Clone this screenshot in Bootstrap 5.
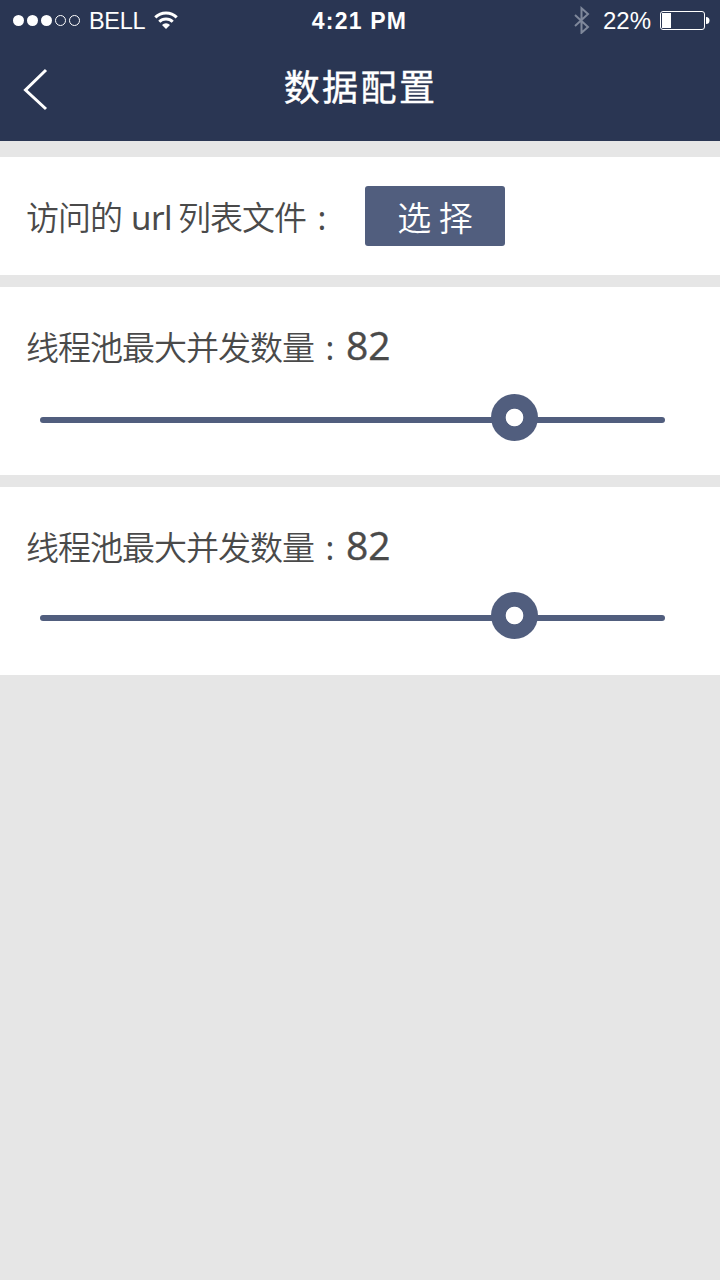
<!DOCTYPE html>
<html lang="zh-CN">
<head>
<meta charset="utf-8">
<meta name="viewport" content="width=device-width, initial-scale=1">
<title>数据配置</title>
<link href="https://cdn.jsdelivr.net/npm/bootstrap@5.3.0/dist/css/bootstrap.min.css" rel="stylesheet">
<style>
  body { background: #e6e6e6; color: #4a4a4a; font-family: "Noto Sans", "Noto Sans CJK SC", sans-serif; }
  .app-head { background: #2a3653; height: 141px; color: #fff; }
  .status-bar { height: 40px; font: 24px/40px "Liberation Sans", sans-serif; }
  .status-bar > div { flex: 1 1 0; }
  .status-bar svg, .title-bar svg { display: block; flex: none; }
  .signal { margin-left: 12px; }
  .battery { margin-right: 10px; }
  .carrier { font-size: 23.5px; letter-spacing: -.3px; margin-left: 8px; padding-top: 2px; }
  .clock { font-size: 23px; font-weight: 700; letter-spacing: 1.2px; margin-right: 1px; padding-top: 1px; }
  .percent { font-size: 24px; margin: 2px 9px 0 13px; }
  .title-bar { height: 101px; }
  .title-bar h1 { font: 400 36px/50px "Noto Sans CJK SC", sans-serif; -webkit-text-stroke: .4px #fff; letter-spacing: 2.4px; margin-top: 20px; padding-left: 1px; }
  .back { left: 20px; top: 26px; }
  .panel { background: #fff; height: 188px; padding: 0 55px 0 26px; }
  .panel-file { height: 118px; }
  .panel-file .label-text { width: 312px; padding-top: 1px; }
  .panel-slider { margin-top: 12px; padding-top: 29px; }
  .panel-slider .form-range { margin-top: 17px; }
  .panel-slider-last .form-range { margin-top: 15px; }
  .label-text { font-family: "Noto Sans CJK SC", sans-serif; font-size: 33px; font-weight: 350; line-height: 60px; letter-spacing: -1px; white-space: nowrap; }
  .latin { font-family: "Noto Sans", sans-serif; font-weight: 400; font-size: 33px; letter-spacing: -.5px; margin: 0 6px 0 9px; }
  .colon { font-family: "Noto Sans", sans-serif; font-weight: 400; letter-spacing: 0; display: inline-block; width: 32px; text-align: center; }
  .btn-pick { background: #515e7e; color: #fff; width: 140px; height: 60px; border-radius: 3px; font: 350 34px/57px "Noto Sans CJK SC", sans-serif; margin-left: 27px; }
  .btn-pick:hover { background: #465372; color: #fff; }
  .amount { font: 400 39px/57px "Open Sans", "Noto Sans", sans-serif; -webkit-text-stroke: .4px #4a4a4a; }
  .form-range { display: block; width: 625px; height: 50px; margin-left: 14px; }
  .form-range::-webkit-slider-runnable-track { height: 6px; background: #515e7e; border-radius: 3px; }
  .form-range::-webkit-slider-thumb { width: 47px; height: 47px; margin-top: -23px; border-radius: 50%; background: radial-gradient(circle, #fff 8.4px, #515e7e 9.2px); }
</style>
</head>
<body>
<header class="app-head">
  <div class="status-bar d-flex align-items-center">
    <div class="d-flex align-items-center">
      <svg class="signal" width="69" height="14" viewBox="0 0 69 14">
        <g fill="#fff"><circle cx="6.5" cy="7.5" r="5.5"/><circle cx="20.5" cy="7.5" r="5.5"/><circle cx="34.5" cy="7.5" r="5.5"/></g>
        <g fill="none" stroke="#fff"><circle cx="48.5" cy="7.5" r="5"/><circle cx="62.5" cy="7.5" r="5"/></g>
      </svg>
      <span class="carrier">BELL</span>
      <svg class="ms-2" width="26" height="20" viewBox="0 0 26 20">
        <g fill="none" stroke="#fff" stroke-width="3"><path d="M2.3 7.4a15 15 0 0 1 21.4 0"/><path d="M6.3 11.8a9.5 9.5 0 0 1 13.4 0"/></g>
        <path fill="#fff" d="M13 19l-4-4a5.7 5.7 0 0 1 8 0z"/>
      </svg>
    </div>
    <span class="clock">4:21 PM</span>
    <div class="d-flex align-items-center justify-content-end">
      <svg width="16" height="28" viewBox="0 0 16 28"><path fill="none" stroke="#7f889b" stroke-width="2" d="M1 9l13 12-6.500 5.800V2.200L14 8 1 20"/></svg>
      <span class="percent">22%</span>
      <svg class="battery" width="50" height="20" viewBox="0 0 50 20">
        <rect x=".5" y="1.5" width="44" height="18" rx="2.500" fill="none" stroke="#fff"/>
        <rect x="2" y="3" width="9" height="15" fill="#fff"/>
        <path fill="#fff" d="M46 7a3.500 3.500 0 0 1 0 7z"/>
      </svg>
    </div>
  </div>
  <div class="title-bar position-relative text-center">
    <a href="#" class="back position-absolute" aria-label="返回">
      <svg width="30" height="46" viewBox="0 0 30 46"><path fill="none" stroke="#fff" stroke-width="3" d="M26 4L5.500 24 26 43"/></svg>
    </a>
    <h1 class="d-inline-block mb-0">数据配置</h1>
  </div>
</header>

<main class="d-flex flex-column pt-3">
  <section class="panel panel-file d-flex align-items-center">
    <span class="label-text">访问的<span class="latin">url</span>列表文件<span class="colon">:</span></span>
    <button type="button" class="btn btn-pick p-0 border-0">选 择</button>
  </section>
  <section class="panel panel-slider">
    <div class="d-flex"><span class="label-text">线程池最大并发数量<span class="colon">:</span></span><span class="amount">82</span></div>
    <input type="range" class="form-range" min="0" max="105" value="82" aria-label="线程池最大并发数量">
  </section>
  <section class="panel panel-slider panel-slider-last">
    <div class="d-flex"><span class="label-text">线程池最大并发数量<span class="colon">:</span></span><span class="amount">82</span></div>
    <input type="range" class="form-range" min="0" max="105" value="82" aria-label="线程池最大并发数量">
  </section>
</main>
<script src="https://cdn.jsdelivr.net/npm/bootstrap@5.3.0/dist/js/bootstrap.bundle.min.js"></script>
</body>
</html>
